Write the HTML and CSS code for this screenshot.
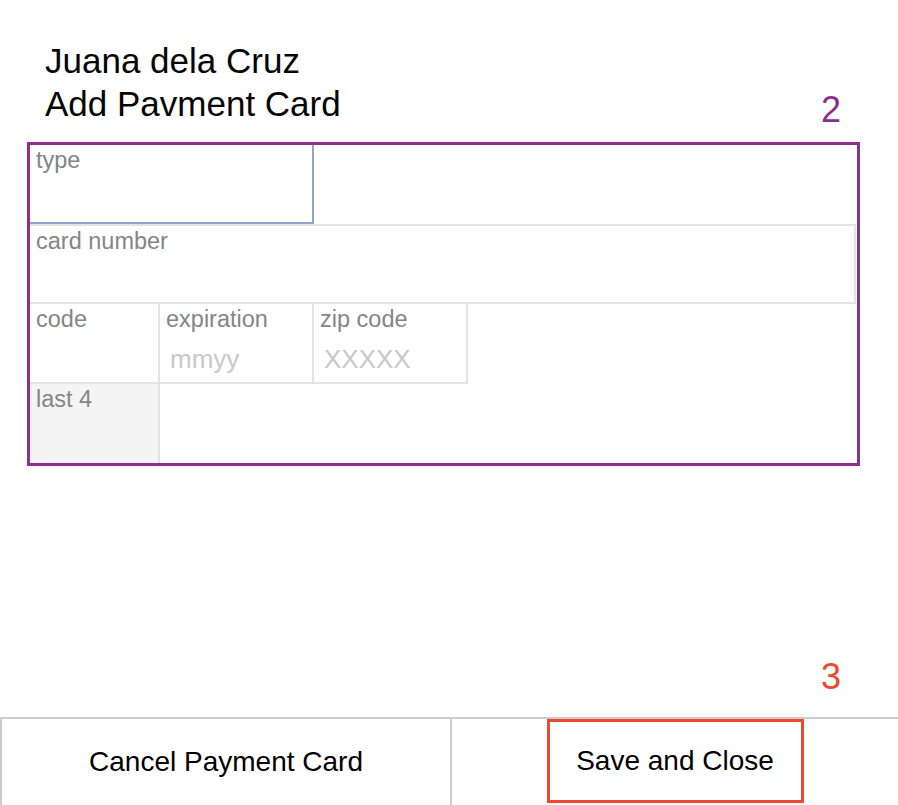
FILE: index.html
```html
<!DOCTYPE html>
<html lang="en">
<head>
<meta charset="utf-8">
<title>Add Payment Card</title>
<link rel="stylesheet" href="styles.css">
</head>
<body>
  <header class="header">
    <div class="title">
      <div>Juana dela Cruz</div>
      <div>Add Pavment Card</div>
    </div>
    <div class="marker marker-purple">2</div>
  </header>

  <section class="card">
    <div class="row">
      <div class="field field-type"><span class="label">type</span></div>
    </div>
    <div class="row">
      <div class="field field-number"><span class="label">card number</span></div>
    </div>
    <div class="row row-overlap">
      <div class="field field-first field-short"><span class="label">code</span></div>
      <div class="field field-mid"><span class="label">expiration</span><span class="placeholder">mmyy</span></div>
      <div class="field field-mid"><span class="label">zip code</span><span class="placeholder">XXXXX</span></div>
    </div>
    <div class="row row-overlap">
      <div class="field field-first field-short field-last4"><span class="label">last 4</span></div>
    </div>
  </section>

  <div class="spacer"></div>

  <div class="marker-row">
    <div class="marker marker-red">3</div>
  </div>

  <footer class="footer">
    <div class="half half-left">
      <span class="btn-text">Cancel Payment Card</span>
    </div>
    <div class="half half-right">
      <div class="save-btn"><span class="btn-text">Save and Close</span></div>
    </div>
  </footer>
</body>
</html>
```

FILE: styles.css
```css
html, body {
  margin: 0;
  padding: 0;
  background: #ffffff;
}

body {
  height: 805px;
  display: flex;
  flex-direction: column;
  font-family: "Liberation Sans", Arial, sans-serif;
  color: #000;
  overflow: hidden;
}

.header {
  display: flex;
  justify-content: space-between;
  align-items: flex-end;
  padding: 39px 57px 0 45px;
}

.title {
  font-size: 35px;
  line-height: 43px;
  color: #050505;
}

.marker {
  font-size: 36px;
  line-height: 36px;
}

.marker-purple {
  color: #8b2d8f;
  margin-bottom: -3px;
}

.marker-red {
  color: #ea4a2f;
}

.card {
  box-sizing: border-box;
  margin: 17px 0 0 27px;
  width: 833px;
  height: 324px;
  border: 3px solid #8d2f92;
  display: flex;
  flex-direction: column;
}

.row {
  display: flex;
}

.row-overlap {
  margin-top: -2px;
}

.field {
  box-sizing: border-box;
  border: 2px solid #e3e3e3;
  padding: 2px 0 0 6px;
  display: flex;
  flex-direction: column;
  align-items: flex-start;
}

.label {
  font-size: 23.5px;
  color: #858585;
}

.placeholder {
  font-size: 26px;
  color: #c8c8c8;
  margin-top: 11px;
  padding-left: 4px;
}

.field-type {
  width: 284px;
  height: 79px;
  border: 0;
  border-right: 2px solid #93a2cf;
  border-bottom: 2px solid #93a2cf;
}

.field-number {
  width: 826px;
  height: 80px;
  border-left: 0;
}

.field-first {
  border-left: 0;
}

.field-short {
  width: 130px;
  height: 82px;
}

.field-mid {
  width: 156px;
  height: 82px;
  margin-left: -2px;
}

.field-last4 {
  background: #f4f4f4;
  border-bottom: 0;
  height: 81px;
}

.spacer {
  flex: 1;
}

.marker-row {
  display: flex;
  justify-content: flex-end;
  padding-right: 57px;
  margin-bottom: 22px;
}

.footer {
  box-sizing: border-box;
  height: 88px;
  border-top: 2px solid #cccccc;
  display: flex;
}

.half {
  box-sizing: border-box;
  display: flex;
  justify-content: center;
}

.half-left {
  width: 452px;
  border-left: 2px solid #cccccc;
  border-right: 2px solid #cccccc;
  align-items: center;
}

.half-right {
  flex: 1;
  align-items: flex-start;
}

.btn-text {
  font-size: 28px;
  color: #000;
}

.save-btn {
  box-sizing: border-box;
  width: 257px;
  height: 84px;
  border: 3px solid #ea4a2f;
  display: flex;
  align-items: center;
  justify-content: center;
}
```
